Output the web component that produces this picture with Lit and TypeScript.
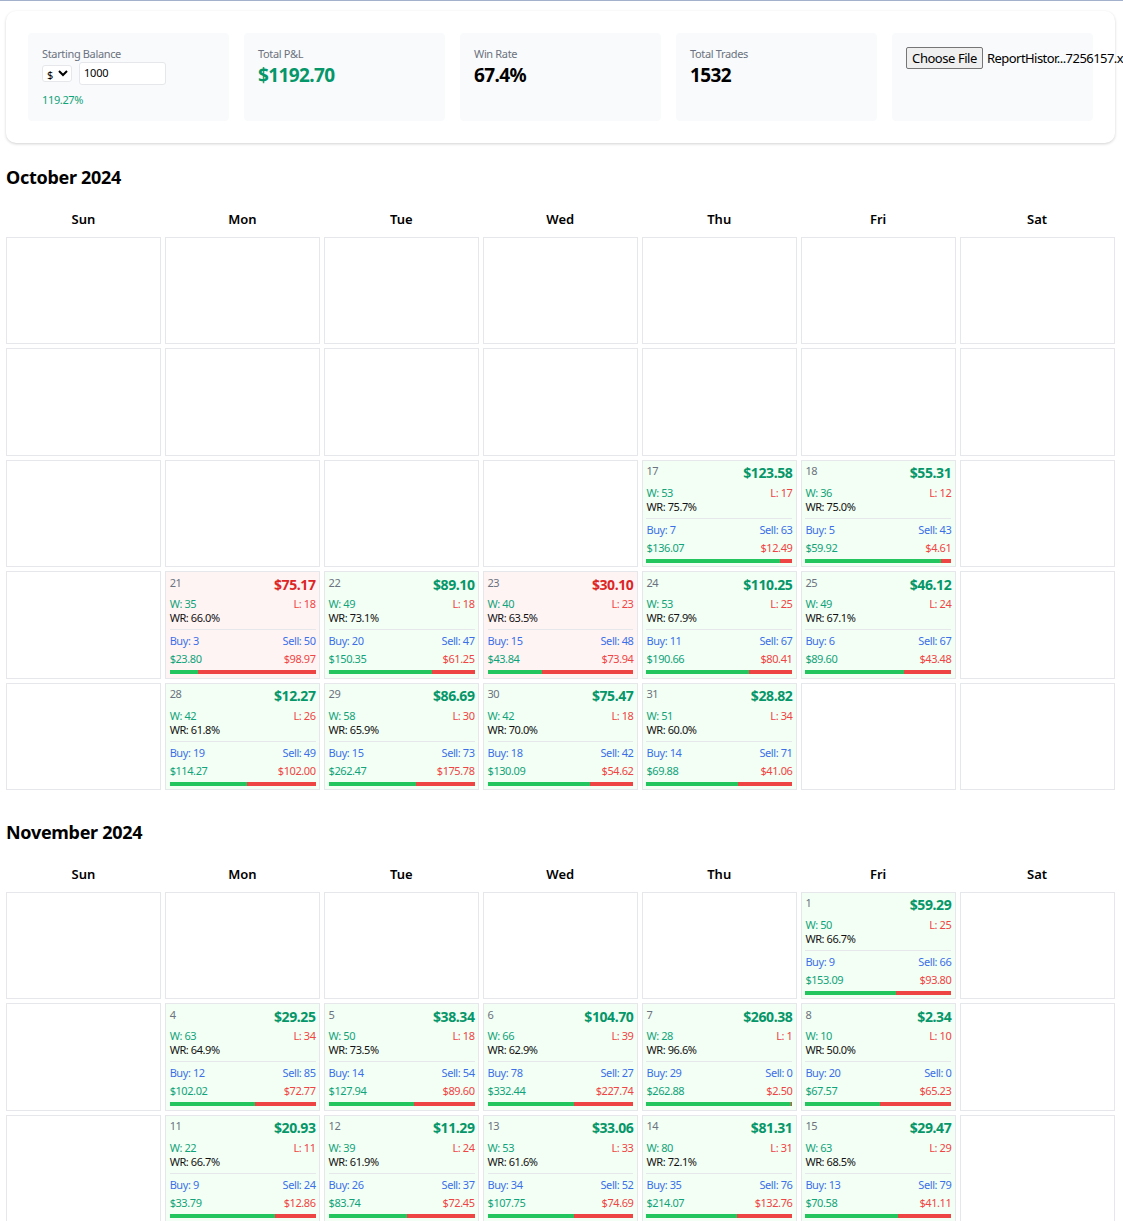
import { LitElement, html, css } from "lit";
import { customElement } from "lit/decorators.js";

type Day = { d: number; p: string; loss?: boolean; w: number; l: number; wr: string; b: number; s: number; bp: string; sp: string };
const D = (d: number, p: string, loss: boolean, w: number, l: number, wr: string, b: number, s: number, bp: string, sp: string): Day => ({ d, p, loss, w, l, wr, b, s, bp, sp });

const oct: (Day | null)[] = [
  ...Array(14).fill(null),
  null, null, null, null,
  D(17, "123.58", false, 53, 17, "75.7", 7, 63, "136.07", "12.49"),
  D(18, "55.31", false, 36, 12, "75.0", 5, 43, "59.92", "4.61"),
  null, null,
  D(21, "75.17", true, 35, 18, "66.0", 3, 50, "23.80", "98.97"),
  D(22, "89.10", false, 49, 18, "73.1", 20, 47, "150.35", "61.25"),
  D(23, "30.10", true, 40, 23, "63.5", 15, 48, "43.84", "73.94"),
  D(24, "110.25", false, 53, 25, "67.9", 11, 67, "190.66", "80.41"),
  D(25, "46.12", false, 49, 24, "67.1", 6, 67, "89.60", "43.48"),
  null, null,
  D(28, "12.27", false, 42, 26, "61.8", 19, 49, "114.27", "102.00"),
  D(29, "86.69", false, 58, 30, "65.9", 15, 73, "262.47", "175.78"),
  D(30, "75.47", false, 42, 18, "70.0", 18, 42, "130.09", "54.62"),
  D(31, "28.82", false, 51, 34, "60.0", 14, 71, "69.88", "41.06"),
  null, null,
];
const nov: (Day | null)[] = [
  null, null, null, null, null,
  D(1, "59.29", false, 50, 25, "66.7", 9, 66, "153.09", "93.80"),
  null, null,
  D(4, "29.25", false, 63, 34, "64.9", 12, 85, "102.02", "72.77"),
  D(5, "38.34", false, 50, 18, "73.5", 14, 54, "127.94", "89.60"),
  D(6, "104.70", false, 66, 39, "62.9", 78, 27, "332.44", "227.74"),
  D(7, "260.38", false, 28, 1, "96.6", 29, 0, "262.88", "2.50"),
  D(8, "2.34", false, 10, 10, "50.0", 20, 0, "67.57", "65.23"),
  null, null,
  D(11, "20.93", false, 22, 11, "66.7", 9, 24, "33.79", "12.86"),
  D(12, "11.29", false, 39, 24, "61.9", 26, 37, "83.74", "72.45"),
  D(13, "33.06", false, 53, 33, "61.6", 34, 52, "107.75", "74.69"),
  D(14, "81.31", false, 80, 31, "72.1", 35, 76, "214.07", "132.76"),
  D(15, "29.47", false, 63, 29, "68.5", 13, 79, "70.58", "41.11"),
  null,
];

@customElement("app-root")
export class AppRoot extends LitElement {
  static styles = css`
    :host {
      display: block;
      height: 1221px;
      overflow: hidden;
      background: #fff;
      font-family: "Noto Sans", "Open Sans", sans-serif;
      color: #000;
    }
    .topline { height: 1px; background: #a3b1cc; }
    .page { padding: 10px 8px 0 6px; }
    .summary {
      height: 132px;
      box-sizing: border-box;
      background: #fff;
      border-radius: 10px;
      box-shadow: 0 1px 3px rgba(0, 0, 0, 0.18);
      padding: 22px;
      display: grid;
      grid-template-columns: repeat(5, 201px);
      gap: 15px;
    }
    .stat {
      background: #f9fafb;
      border-radius: 4px;
      height: 88px;
      box-sizing: border-box;
      padding: 14px;
      white-space: nowrap;
    }
    .label { font-size: 11px; line-height: 13px; margin-bottom: 2px; color: #6b7280; letter-spacing: -0.35px; }
    .value { font-size: 19px; line-height: 26px; font-weight: 700; letter-spacing: -0.6px; }
    .green { color: #059669; }
    .balance { display: flex; align-items: center; gap: 7px; }
    select {
      width: 30px; height: 17px; padding: 0; box-sizing: border-box;
      font: 11px "Noto Sans", sans-serif; background: #fff;
      border: 1px solid #e5e7eb; border-radius: 3px; color: #000;
    }
    input {
      width: 87px; height: 23px; box-sizing: border-box; padding: 0 4px 2px;
      font: 11px "Noto Sans", sans-serif; letter-spacing: -0.2px; background: #fff;
      border: 1px solid #e5e7eb; border-radius: 3px; color: #000;
    }
    .pct { font-size: 11px; line-height: 14px; margin-top: 8px; color: #10a37a; letter-spacing: -0.35px; }
    .file { display: flex; align-items: flex-start; gap: 4px; padding-top: 14px; font-size: 13px; letter-spacing: -0.55px; }
    .file span { line-height: 22px; }
    .file button {
      flex: none;
      font: 13px "Noto Sans", sans-serif; letter-spacing: -0.45px;
      height: 22px; width: 77px; padding: 0; box-sizing: border-box;
      background: #efefef; border: 1px solid #767676; border-radius: 2px; color: #000;
    }
    h2 { margin: 0; font-size: 18px; line-height: 24px; font-weight: 700; letter-spacing: -0.3px; }
    .month { padding-top: 21.8px; }
    .month + .month { padding-top: 29.3px; }
    .head { display: grid; grid-template-columns: repeat(7, 154.94px); gap: 4px; margin-top: 20px; height: 28px; }
    .head div { text-align: center; font-size: 13px; line-height: 20px; font-weight: 600; }
    .grid { display: grid; grid-template-columns: repeat(7, 154.94px); grid-auto-rows: 107.7px; gap: 3.8px 4px; }
    .cell {
      box-sizing: border-box; border: 1px solid #e5e7eb; padding: 4.4px 3.3px 3.6px 3.7px;
      display: flex; flex-direction: column; font-size: 11px; line-height: 14px; letter-spacing: -0.42px;
    }
    .cell.win { background: #f3fff4; }
    .cell.lossb { background: #fff4f4; }
    .row { display: flex; justify-content: space-between; }
    .top { height: 25px; }
    .num { color: #6b7280; font-size: 11px; line-height: 14px; margin-top: -1px; }
    .pnl { font-size: 14px; font-weight: 700; line-height: 19px; margin-top: -2px; letter-spacing: -0.4px; }
    .red { color: #dc2626; }
    .w { color: #10a37a; }
    .l { color: #ef4444; }
    .wr { color: #111; }
    .sep { border-top: 1px solid #e5e7eb; margin: 4px 0 4px; }
    .blue { color: #3b6fe8; }
    .amounts { margin-top: 4px; }
    .bar { display: flex; height: 4px; margin-top: 4px; flex: none; }
    .bar i { display: block; height: 100%; }
    .bar .g { background: #22c55e; }
    .bar .r { background: #ef4444; }
  `;

  private cell(c: Day | null) {
    if (!c) return html`<div class="cell"></div>`;
    const a = parseFloat(c.bp), b = parseFloat(c.sp);
    const pct = (a / (a + b)) * 100;
    return html`<div class="cell ${c.loss ? "lossb" : "win"}">
      <div class="row top">
        <span class="num">${c.d}</span>
        <span class="pnl ${c.loss ? "red" : "green"}">$${c.p}</span>
      </div>
      <div class="row"><span class="w">W: ${c.w}</span><span class="l">L: ${c.l}</span></div>
      <div class="wr">WR: ${c.wr}%</div>
      <div class="sep"></div>
      <div class="row blue"><span>Buy: ${c.b}</span><span>Sell: ${c.s}</span></div>
      <div class="row amounts"><span class="w">$${c.bp}</span><span class="l">$${c.sp}</span></div>
      <div class="bar"><i class="g" style="width:${pct}%"></i><i class="r" style="width:${100 - pct}%"></i></div>
    </div>`;
  }

  private month(title: string, cells: (Day | null)[]) {
    return html`<section class="month">
      <h2>${title}</h2>
      <div class="head">${["Sun", "Mon", "Tue", "Wed", "Thu", "Fri", "Sat"].map((d) => html`<div>${d}</div>`)}</div>
      <div class="grid">${cells.map((c) => this.cell(c))}</div>
    </section>`;
  }

  render() {
    return html`<div class="topline"></div>
      <div class="page">
        <div class="summary">
          <div class="stat">
            <div class="label">Starting Balance</div>
            <div class="balance">
              <select><option>$</option></select>
              <input value="1000" />
            </div>
            <div class="pct">119.27%</div>
          </div>
          <div class="stat"><div class="label">Total P&amp;L</div><div class="value green">$1192.70</div></div>
          <div class="stat"><div class="label">Win Rate</div><div class="value">67.4%</div></div>
          <div class="stat"><div class="label">Total Trades</div><div class="value">1532</div></div>
          <div class="stat file"><button>Choose File</button><span>ReportHistor...7256157.xlsx</span></div>
        </div>
        ${this.month("October 2024", oct)}
        ${this.month("November 2024", nov)}
      </div>`;
  }
}
